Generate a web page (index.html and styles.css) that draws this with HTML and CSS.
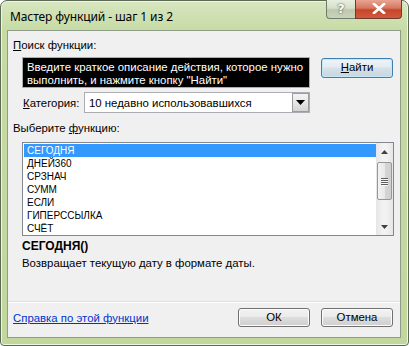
FILE: index.html
```html
<!DOCTYPE html>
<html lang="ru">
<head>
<meta charset="utf-8">
<title>Мастер функций</title>
<link rel="stylesheet" href="styles.css">
</head>
<body>
<div class="window">
  <div class="titlebar">
    <div class="title">Мастер функций - шаг 1 из 2</div>
    <div class="caption-buttons">
      <div class="cap-help">?</div>
      <div class="cap-close">
        <svg width="14" height="11" viewBox="0 0 14 11"><path d="M2 1 L12 10 M12 1 L2 10" stroke="#fff" stroke-width="2.6" stroke-linecap="square" fill="none"/><path d="M2 1 L12 10 M12 1 L2 10" stroke="#fff" stroke-width="2.2" fill="none"/></svg>
      </div>
    </div>
  </div>
  <div class="client">
    <div class="label first"><u>П</u>оиск функции:</div>
    <div class="search-row">
      <div class="search-box">Введите краткое описание действия, которое нужно<br>выполнить, и нажмите кнопку "Найти"</div>
      <div class="btn btn-default"><u>Н</u>айти</div>
    </div>
    <div class="category-row">
      <div class="cat-label"><u>К</u>атегория:</div>
      <div class="select">
        <span class="select-text">10 недавно использовавшихся</span>
        <span class="select-btn"><svg width="9" height="5" viewBox="0 0 9 5"><path d="M0 0 H9 L4.5 5 Z" fill="#000"/></svg></span>
      </div>
    </div>
    <div class="label second">Выберите <u>ф</u>ункцию:</div>
    <div class="listbox">
      <ul class="items">
        <li class="sel">СЕГОДНЯ</li>
        <li>ДНЕЙ360</li>
        <li>СРЗНАЧ</li>
        <li>СУММ</li>
        <li>ЕСЛИ</li>
        <li>ГИПЕРССЫЛКА</li>
        <li>СЧЁТ</li>
      </ul>
      <div class="scrollbar">
        <div class="arrow"><svg width="7" height="4" viewBox="0 0 7 4"><path d="M0 4 H7 L3.5 0 Z" fill="#404040"/></svg></div>
        <div class="track">
          <div class="thumb"><span></span><span></span><span></span><span></span></div>
        </div>
        <div class="arrow"><svg width="7" height="4" viewBox="0 0 7 4"><path d="M0 0 H7 L3.5 4 Z" fill="#404040"/></svg></div>
      </div>
    </div>
    <div class="fn-name">СЕГОДНЯ()</div>
    <div class="fn-desc">Возвращает текущую дату в формате даты.</div>
    <div class="separator"></div>
    <div class="bottom-row">
      <a class="help-link" href="#">Справка по этой функции</a>
      <div class="buttons">
        <div class="btn">ОК</div>
        <div class="btn">Отмена</div>
      </div>
    </div>
  </div>
</div>
</body>
</html>
```

FILE: styles.css
```css
* { box-sizing: border-box; }
html, body { margin: 0; padding: 0; }
body {
  width: 409px;
  height: 346px;
  background: #ffffff;
  font-family: "Liberation Sans", Arial, sans-serif;
  font-size: 11.4px;
  color: #000;
}
.window {
  width: 409px;
  height: 346px;
  border: 1px solid #5d6b56;
  border-radius: 7px 7px 4px 4px;
  background: linear-gradient(180deg, #d8e6c0 0px, #c6dba4 30px, #c2d79e 100%);
  box-shadow: inset 0 0 0 1px #eef5e2;
  padding: 0 7px 7px 6px;
  display: flex;
  flex-direction: column;
}
.titlebar {
  height: 29px;
  display: flex;
  justify-content: space-between;
  align-items: flex-start;
}
.title {
  margin-top: 8px;
  margin-left: 3px;
  font-family: "Noto Sans", "Open Sans", sans-serif;
  font-size: 12px;
  line-height: 16px;
  letter-spacing: -0.1px;
}
.caption-buttons {
  display: flex;
  margin-top: -1px;
  margin-right: -1px;
}
.cap-help {
  width: 29px;
  height: 19px;
  border: 1px solid #6f7d68;
  border-top: none;
  border-right: none;
  border-radius: 0 0 0 4px;
  background: linear-gradient(180deg, #e8eedf 0%, #d6dfca 45%, #bcc8ad 55%, #c9d3bc 100%);
  color: #fff;
  font-family: "DejaVu Sans", sans-serif;
  font-weight: bold;
  font-size: 13px;
  line-height: 18px;
  text-align: center;
  text-shadow: 0 0 2px #4e5a46, 0 0 1px #4e5a46;
}
.cap-close {
  width: 47px;
  height: 19px;
  border: 1px solid #6d3a2e;
  border-top: none;
  border-radius: 0 0 4px 0;
  background: linear-gradient(180deg, #e8a493 0%, #d7775f 45%, #c7452a 55%, #d3593c 100%);
  display: flex;
  align-items: center;
  justify-content: center;
  padding-bottom: 1px;
}
.client {
  flex: 1;
  border: 1px solid #8f9c89;
  background: #f0f0f0;
  display: flex;
  flex-direction: column;
}
.label {
  padding-left: 5px;
  line-height: 14px;
  height: 14px;
}
.label.first { margin-top: 7px; }
.label.second { margin-top: 8px; }
.search-row {
  margin-top: 5px;
  display: flex;
  align-items: flex-start;
}
.search-box {
  margin-left: 14px;
  width: 288px;
  height: 31px;
  background: #000;
  color: #fff;
  border: 1px solid #abadb3;
  padding: 3px 4px 0 4px;
  line-height: 13px;
  white-space: nowrap;
}
.btn {
  width: 72px;
  height: 19px;
  border: 1px solid #707070;
  border-radius: 3px;
  background: linear-gradient(180deg, #f2f2f2 0%, #ebebeb 45%, #dddddd 50%, #cfcfcf 100%);
  box-shadow: inset 0 0 0 1px #fcfcfc;
  text-align: center;
  line-height: 16px;
}
.btn-default {
  margin-left: 11px;
  margin-top: 1px;
  height: 20px;
  line-height: 17px;
  border-color: #3c7fb1;
  background: linear-gradient(180deg, #eef4f8 0%, #e4ecf1 45%, #d6e1e8 50%, #c9d6de 100%);
  box-shadow: inset 0 0 0 1px #c5e8f8;
}
.category-row {
  margin-top: 4px;
  display: flex;
  align-items: center;
  height: 21px;
}
.cat-label {
  margin-left: 15px;
  width: 61px;
  flex: none;
  white-space: nowrap;
}
.select {
  width: 226px;
  height: 21px;
  border: 1px solid #abadb3;
  background: #fff;
  display: flex;
  align-items: center;
  justify-content: space-between;
}
.select-text {
  padding-left: 4px;
}
.select-btn {
  width: 17px;
  height: 19px;
  border: 1px solid #9c9c9c;
  background: linear-gradient(180deg, #f4f4f4 0%, #e6e6e6 50%, #d4d4d4 100%);
  display: flex;
  align-items: center;
  justify-content: center;
}
.listbox {
  margin-top: 7px;
  margin-left: 14px;
  width: 372px;
  height: 94px;
  border: 1px solid #828790;
  background: #fff;
  display: flex;
  overflow: hidden;
}
.items {
  list-style: none;
  margin: 0;
  padding: 1px 0 0 1px;
  flex: 1;
  font-size: 10px;
}
.items li {
  height: 13px;
  line-height: 13px;
  padding-left: 3px;
}
.items li.sel {
  background: #3399ff;
  color: #fff;
}
.scrollbar {
  width: 17px;
  display: flex;
  flex-direction: column;
  background: linear-gradient(90deg, #e6e6e6, #f2f2f2 40%, #f2f2f2 60%, #e6e6e6);
}
.arrow {
  height: 17px;
  display: flex;
  align-items: center;
  justify-content: center;
}
.track {
  flex: 1;
  padding-top: 2px;
}
.thumb {
  margin: 0 1px;
  height: 38px;
  border: 1px solid #979797;
  border-radius: 2px;
  background: linear-gradient(90deg, #f3f3f3 0%, #e8e8e8 50%, #d6d6d6 51%, #cfcfcf 100%);
  display: flex;
  flex-direction: column;
  align-items: center;
  justify-content: center;
  gap: 1px;
}
.thumb span {
  width: 7px;
  height: 1px;
  background: #5e5e5e;
  box-shadow: 0 1px 0 #f8f8f8;
}
.fn-name {
  margin-top: 2px;
  margin-left: 14px;
  font-weight: bold;
  font-size: 12px;
  line-height: 16px;
}
.fn-desc {
  margin-top: 2px;
  margin-left: 14px;
  line-height: 14px;
}
.separator {
  margin-top: 31px;
  height: 2px;
  border-top: 1px solid #dfdfdf;
  border-bottom: 1px solid #ffffff;
}
.bottom-row {
  margin-top: 5px;
  display: flex;
  justify-content: space-between;
  align-items: center;
}
.help-link {
  margin-left: 5px;
  color: #0033cc;
  text-decoration: underline;
}
.buttons {
  display: flex;
  gap: 11px;
  margin-right: 7px;
}
```
